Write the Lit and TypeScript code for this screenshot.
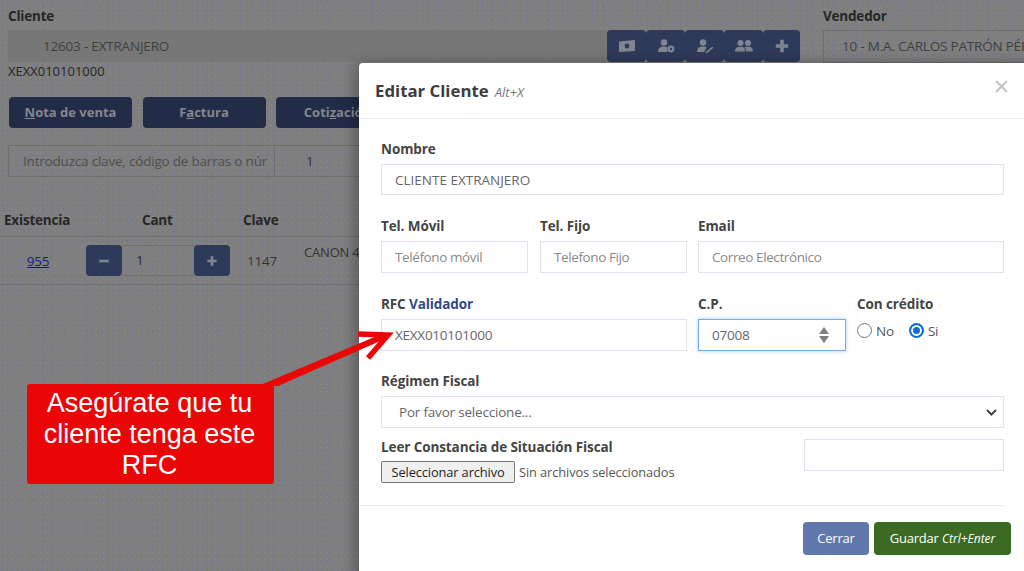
import { LitElement, html, css, svg } from 'lit';
import { customElement } from 'lit/decorators.js';

const iconMoney = svg`<path d="M1 3.500l16-1.500v11L1 14z" fill="currentColor"/><circle cx="9" cy="8" r="2.400" fill="#2e3a59"/>`;
const iconUserCog = svg`<circle cx="7" cy="4.500" r="3.200" fill="currentColor"/><path d="M1 14c0-4 2.500-5.500 6-5.500 1.500 0 2.600.3 3.500.8V14z" fill="currentColor"/><circle cx="14" cy="11" r="3.400" fill="currentColor"/><circle cx="14" cy="11" r="1.200" fill="#2e3a59"/>`;
const iconUserEdit = svg`<circle cx="7" cy="4.500" r="3.200" fill="currentColor"/><path d="M1 14c0-4 2.500-5.500 6-5.500 1.500 0 2.800.3 3.700.9L8 14z" fill="currentColor"/><path d="M9.500 14l7-5.500 1 1.200-6 5H9.500z" fill="currentColor"/>`;
const iconUsers = svg`<circle cx="5.500" cy="5" r="3" fill="currentColor"/><circle cx="13" cy="5" r="3" fill="currentColor"/><path d="M0 13.500c0-3.500 2.200-4.700 5.500-4.700s4.500 1.200 4.500 4.700zM11 13.500c0-2-.4-3.400-1.500-4.300 1-.3 2.200-.4 3.500-.4 3.300 0 5 1.200 5 4.700z" fill="currentColor"/>`;
const iconPlus = svg`<path d="M7 2h4v5h5v4h-5v5H7v-5H2V7h5z" fill="currentColor"/>`;

@customElement('app-root')
export class AppRoot extends LitElement {
  static styles = css`
    :host {
      display: block;
      position: relative;
      width: 1024px;
      height: 571px;
      overflow: hidden;
      font-family: 'Open Sans', 'Liberation Sans', sans-serif;
      font-size: 13.5px;
      letter-spacing: -0.2px;
      color: #2b2b2b;
      background-color: #7f7f7f;
    }

    /* page behind the modal */
    .page {
      height: 571px;
      box-sizing: border-box;
      padding-top: 8px;
      background-image: radial-gradient(circle, rgba(100, 110, 175, 0.55) 0.6px, transparent 0.8px),
        radial-gradient(circle, rgba(165, 160, 90, 0.5) 0.6px, transparent 0.8px),
        radial-gradient(circle, rgba(100, 110, 175, 0.45) 0.6px, transparent 0.8px);
      background-size: 5px 5px, 7px 7px, 11px 3px;
      background-position: 0 8px, 2px 10px, 4px 9px;
    }
    .top {
      display: flex;
      padding-left: 8px;
    }
    .cli {
      width: 792px;
      flex: none;
    }
    .lbl {
      font-weight: 700;
      font-size: 13.5px;
      line-height: 16px;
      color: #262626;
      height: 22px;
    }
    .sel-row {
      display: flex;
      height: 32px;
    }
    .fake {
      flex: 1;
      background: #777;
      color: #3f3f3f;
      line-height: 32px;
      padding-left: 35px;
    }
    .ico-group {
      display: flex;
    }
    .ico {
      width: 39px;
      display: flex;
      align-items: center;
      justify-content: center;
      background: #2e3a59;
      border-radius: 4px;
      color: #7f8491;
    }
    .ico:last-child {
      width: 37px;
    }
    .ico svg {
      width: 18px;
      height: 16px;
    }
    .vend {
      margin-left: 23px;
      flex: 1;
      min-width: 0;
    }
    .vend .val {
      border: 1px solid #6e6e6e;
      border-right: 0;
      height: 31px;
      line-height: 31px;
      padding-left: 18px;
      color: #3f3f3f;
      white-space: nowrap;
      overflow: hidden;
    }
    .rfc {
      padding-left: 8px;
      font-size: 13px;
      letter-spacing: 0;
      line-height: 17px;
      color: #262626;
    }
    .btns {
      display: flex;
      gap: 10.5px;
      padding: 17px 0 0 9px;
    }
    .dark {
      width: 123px;
      height: 31px;
      flex: none;
      border-radius: 4px;
      background: #222c47;
      color: #85878d;
      font-weight: 700;
      font-size: 13px;
      letter-spacing: 0;
      line-height: 31px;
      text-align: center;
    }
    .search {
      display: flex;
      margin: 17px 0 0 8px;
      height: 32px;
      width: 351px;
      box-sizing: border-box;
      border: 1px solid #6e6e6e;
      border-right: 0;
      color: #4e4e4e;
      line-height: 30px;
    }
    .search .q {
      width: 266px;
      box-sizing: border-box;
      padding: 0 7px 0 14px;
      border-right: 1px solid #6e6e6e;
      white-space: nowrap;
      overflow: hidden;
    }
    .search .n {
      padding-left: 31px;
      color: #333;
    }
    .heads {
      display: grid;
      grid-template-columns: 138px 101px 100px;
      padding: 33px 0 0 4px;
      font-weight: 700;
      line-height: 20px;
      height: 37px;
      box-sizing: border-box;
      color: #262626;
    }
    .row {
      display: flex;
      margin-top: 22px;
      height: 49px;
      width: 359px;
      box-sizing: border-box;
      border-top: 1px solid #6e6e6e;
      border-bottom: 1px solid #6e6e6e;
      align-items: center;
    }
    .row a {
      width: 76px;
      text-align: center;
      color: #1a1a8c;
      text-decoration: underline;
      flex: none;
      margin-right: 10px;
    }
    .stepper {
      display: flex;
      width: 144px;
      height: 31px;
      flex: none;
    }
    .stepper b {
      width: 36px;
      flex: none;
      background: #2e3a59;
      border-radius: 4px;
      color: #7f8491;
      display: flex;
      align-items: center;
      justify-content: center;
    }
    .stepper b svg {
      width: 12px;
      height: 12px;
    }
    .stepper span {
      flex: 1;
      border-top: 1px solid #6e6e6e;
      border-bottom: 1px solid #6e6e6e;
      line-height: 29px;
      padding-left: 14px;
    }
    .row .key {
      margin-left: 17px;
      color: #333;
    }
    .row .desc {
      margin-left: 27px;
      align-self: flex-start;
      margin-top: 6px;
      font-size: 13px;
      color: #333;
      white-space: nowrap;
    }

    /* modal */
    .modal {
      position: absolute;
      left: 359px;
      top: 63px;
      width: 680px;
      height: 520px;
      background: #fff;
      border-top-left-radius: 4px;
      box-shadow: -4px 0 14px rgba(0, 0, 0, 0.3);
      color: #444;
    }
    .m-head {
      display: flex;
      align-items: baseline;
      height: 56px;
      box-sizing: border-box;
      padding: 16px 0 0 16px;
      border-bottom: 1px solid #eeeeee;
      position: relative;
    }
    .m-head h2 {
      margin: 0;
      font-size: 16.8px;
      line-height: 24px;
      font-weight: 700;
      letter-spacing: 0;
      color: #3d3d3d;
    }
    .m-head i {
      margin-left: 6px;
      font-size: 13px;
      letter-spacing: 0;
      color: #777;
    }
    .close {
      position: absolute;
      left: 636px;
      top: 17px;
      width: 13px;
      height: 13px;
      stroke: #c4c4c4;
      stroke-width: 2;
    }
    .m-body {
      padding: 21px 0 0 22px;
      box-sizing: border-box;
      width: 645px;
      height: 387px;
      border-bottom: 1px solid #e9e9e9;
    }
    .fr {
      display: flex;
      gap: 11px;
      margin-bottom: 22px;
    }
    .f {
      display: flex;
      flex-direction: column;
    }
    .w-full {
      width: 623px;
    }
    .w-phone {
      width: 147px;
    }
    .w-wide {
      width: 306px;
    }
    .w-cp {
      width: 148px;
    }
    .w-phone.first {
      margin-right: 1px;
    }
    .l {
      font-weight: 700;
      font-size: 13.5px;
      letter-spacing: -0.1px;
      line-height: 18px;
      color: #444;
      height: 24px;
      white-space: nowrap;
    }
    .l em {
      font-style: normal;
      color: #2f4a86;
    }
    .in {
      height: 32px;
      box-sizing: border-box;
      border: 1px solid #dfe3ef;
      line-height: 30px;
      padding-left: 13px;
      color: #666;
      white-space: nowrap;
    }
    .name {
      height: 31px;
      letter-spacing: 0;
    }
    .ph {
      color: #8a8a8a;
      letter-spacing: -0.4px;
    }
    .code {
      letter-spacing: -0.25px;
    }
    .cp {
      display: flex;
      align-items: center;
      justify-content: space-between;
      padding-right: 15px;
      border-color: #74aee6;
      box-shadow: 0 0 4px rgba(116, 174, 230, 0.6);
    }
    .cp svg {
      width: 12px;
      height: 18px;
      fill: #7d7d7d;
    }
    .radios {
      display: flex;
      align-items: center;
      gap: 4px;
      height: 17px;
      margin-top: 3px;
      color: #555;
    }
    .radio {
      width: 15px;
      height: 15px;
      border: 1px solid #767676;
      border-radius: 50%;
      box-sizing: border-box;
      background: #fff;
    }
    .radio.on {
      border: 2px solid #0f6fd1;
      background: #0f6fd1;
      box-shadow: inset 0 0 0 2px #fff;
    }
    .radios .sp {
      margin-right: 11px;
    }
    .regimen {
      display: flex;
      align-items: center;
      justify-content: space-between;
      padding: 0 6px 0 17px;
      color: #666;
    }
    .regimen svg {
      width: 11px;
      height: 7px;
      fill: none;
      stroke: #444;
      stroke-width: 2;
    }
    .snug {
      margin-bottom: 21px;
    }
    .tight {
      margin-bottom: 10px;
    }
    .between {
      justify-content: space-between;
      margin-bottom: 0;
    }
    .l.short {
      height: 23px;
    }
    .extra {
      width: 200px;
      margin-top: 1px;
    }
    .file {
      display: flex;
      align-items: center;
      gap: 4px;
      height: 22px;
      font-size: 12.8px;
      letter-spacing: -0.1px;
      color: #555;
    }
    .file span:first-child {
      border: 1px solid #767676;
      background: #efefef;
      border-radius: 2px;
      color: #222;
      padding: 0 9.5px;
      line-height: 20px;
    }
    .m-foot {
      display: flex;
      gap: 5px;
      padding: 16px 0 0 444px;
    }
    .bt {
      height: 33px;
      border-radius: 4px;
      color: #fff;
      line-height: 33px;
      text-align: center;
      font-size: 13px;
      box-sizing: border-box;
    }
    .cerrar {
      width: 66px;
      background: #6178ad;
    }
    .guardar {
      width: 137px;
      background: #3b6b22;
    }
    .guardar i {
      font-size: 12px;
      letter-spacing: 0;
    }

    /* annotation */
    .arrow {
      position: absolute;
      left: 0;
      top: 0;
      width: 1024px;
      height: 571px;
      pointer-events: none;
    }
    .note {
      position: absolute;
      left: 27px;
      top: 384px;
      width: 247px;
      height: 100px;
      background: #ea0606;
      border-radius: 3px;
      color: #fff;
      font-family: 'Liberation Sans', Arial, sans-serif;
      font-size: 27px;
      letter-spacing: 0;
      line-height: 31px;
      text-align: center;
      padding: 4px 2px 0 0;
      box-sizing: border-box;
    }
  `;

  render() {
    return html`
      <div class="page">
        <div class="top">
          <div class="cli">
            <div class="lbl">Cliente</div>
            <div class="sel-row">
              <div class="fake">12603 - EXTRANJERO</div>
              <div class="ico-group">
                <div class="ico"><svg viewBox="0 0 18 16">${iconMoney}</svg></div>
                <div class="ico"><svg viewBox="0 0 18 16">${iconUserCog}</svg></div>
                <div class="ico"><svg viewBox="0 0 18 16">${iconUserEdit}</svg></div>
                <div class="ico"><svg viewBox="0 0 18 16">${iconUsers}</svg></div>
                <div class="ico"><svg viewBox="0 0 18 18">${iconPlus}</svg></div>
              </div>
            </div>
          </div>
          <div class="vend">
            <div class="lbl">Vendedor</div>
            <div class="val">10 - M.A. CARLOS PATRÓN PÉR</div>
          </div>
        </div>
        <div class="rfc">XEXX010101000</div>
        <div class="btns">
          <div class="dark"><u>N</u>ota de venta</div>
          <div class="dark">F<u>a</u>ctura</div>
          <div class="dark">Coti<u>z</u>ación</div>
        </div>
        <div class="search">
          <div class="q">Introduzca clave, código de barras o núr</div>
          <div class="n">1</div>
        </div>
        <div class="heads"><span>Existencia</span><span>Cant</span><span>Clave</span></div>
        <div class="row">
          <a>955</a>
          <div class="stepper">
            <b><svg viewBox="0 0 18 18"><path d="M2 7h14v4H2z" fill="currentColor"/></svg></b>
            <span>1</span>
            <b><svg viewBox="0 0 18 18">${iconPlus}</svg></b>
          </div>
          <div class="key">1147</div>
          <div class="desc">CANON 4</div>
        </div>
      </div>

      <div class="modal">
        <div class="m-head">
          <h2>Editar Cliente</h2>
          <i>Alt+X</i>
          <svg class="close" viewBox="0 0 13 13"><path d="M1 1l11 11M12 1L1 12"/></svg>
        </div>
        <div class="m-body">
          <div class="fr">
            <div class="f w-full">
              <div class="l">Nombre</div>
              <div class="in name">CLIENTE EXTRANJERO</div>
            </div>
          </div>
          <div class="fr">
            <div class="f w-phone first">
              <div class="l">Tel. Móvil</div>
              <div class="in ph">Teléfono móvil</div>
            </div>
            <div class="f w-phone">
              <div class="l">Tel. Fijo</div>
              <div class="in ph">Telefono Fijo</div>
            </div>
            <div class="f w-wide">
              <div class="l">Email</div>
              <div class="in ph">Correo Electrónico</div>
            </div>
          </div>
          <div class="fr snug">
            <div class="f w-wide">
              <div class="l">RFC <em>Validador</em></div>
              <div class="in code">XEXX010101000</div>
            </div>
            <div class="f w-cp">
              <div class="l">C.P.</div>
              <div class="in cp code">
                07008
                <svg viewBox="0 0 12 18"><path d="M6 1l5 7H1zM6 17l5-7H1z"/></svg>
              </div>
            </div>
            <div class="f">
              <div class="l">Con crédito</div>
              <div class="radios">
                <span class="radio"></span><span class="sp">No</span>
                <span class="radio on"></span><span>Si</span>
              </div>
            </div>
          </div>
          <div class="fr tight">
            <div class="f w-full">
              <div class="l">Régimen Fiscal</div>
              <div class="in regimen">
                Por favor seleccione...
                <svg viewBox="0 0 11 7"><path d="M1 1l4.500 4.500L10 1"/></svg>
              </div>
            </div>
          </div>
          <div class="fr between">
            <div class="f">
              <div class="l short">Leer Constancia de Situación Fiscal</div>
              <div class="file"><span>Seleccionar archivo</span><span>Sin archivos seleccionados</span></div>
            </div>
            <div class="in extra"></div>
          </div>
        </div>
        <div class="m-foot">
          <div class="bt cerrar">Cerrar</div>
          <div class="bt guardar">Guardar <i>Ctrl+Enter</i></div>
        </div>
      </div>

      <svg class="arrow" viewBox="0 0 1024 571">
        <path d="M258 386L384 333L387 338L278 386z" fill="#ea0606"/>
        <path d="M358 334L388 335L368 358" stroke="#ea0606" stroke-width="5.500" fill="none"/>
      </svg>
      <div class="note">Asegúrate que tu<br />cliente tenga este<br />RFC</div>
    `;
  }
}
